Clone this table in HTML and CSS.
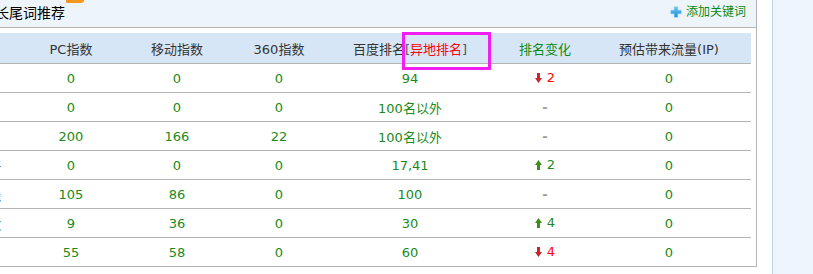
FILE: index.html
```html
<!DOCTYPE html>
<html lang="zh-CN">
<head>
<meta charset="utf-8">
<title>长尾词推荐</title>
<link rel="stylesheet" href="styles.css">
</head>
<body>
<div class="main">
  <div class="bar">
    <span class="badge"></span>
    <h2 class="title">长尾词推荐</h2>
    <a class="add" href="#"><svg class="plus" width="12" height="12" viewBox="0 0 12 12"><defs><linearGradient id="pg" x1="0" y1="0" x2="0" y2="1"><stop offset="0" stop-color="#6cc4f2"/><stop offset="1" stop-color="#1f8fd6"/></linearGradient></defs><path d="M4 0.5h4v3.5h3.5v4H8v3.5H4V8H0.5V4H4z" fill="url(#pg)" stroke="#bfe3f7" stroke-width="0.8"/></svg>添加关键词</a>
  </div>
  <table class="grid">
    <colgroup>
      <col class="c-kw"><col class="c-pc"><col class="c-mo"><col class="c-360"><col class="c-bd"><col class="c-ch"><col class="c-ip">
    </colgroup>
    <thead>
      <tr>
        <th class="kw">关键词</th>
        <th>PC指数</th>
        <th>移动指数</th>
        <th>360指数</th>
        <th class="bd">百度排名<span class="br">[</span><span class="red">异地排名</span><span class="br">]</span><span class="mark"></span></th>
        <th class="green">排名变化</th>
        <th>预估带来流量(IP)</th>
      </tr>
    </thead>
    <tbody>
      <tr><td class="kw">关键词排名优化</td><td>0</td><td>0</td><td>0</td><td>94</td><td><span class="chg down"><svg class="arr" width="7" height="10" viewBox="0 0 7 10"><path d="M2 0h3v5h2l-3.5 5L0 5h2z" fill="#c8262b"/></svg>2</span></td><td>0</td></tr>
      <tr><td class="kw">网站关键词优化</td><td>0</td><td>0</td><td>0</td><td>100名以外</td><td><span class="dash">-</span></td><td>0</td></tr>
      <tr><td class="kw">关键词排名</td><td>200</td><td>166</td><td>22</td><td>100名以外</td><td><span class="dash">-</span></td><td>0</td></tr>
      <tr><td class="kw">网站关键词排名优化推广哪家好</td><td>0</td><td>0</td><td>0</td><td>17,41</td><td><span class="chg up"><svg class="arr" width="7" height="10" viewBox="0 0 7 10"><path d="M3.5 0L7 5H5v5H2V5H0z" fill="#3c8e1c"/></svg>2</span></td><td>0</td></tr>
      <tr><td class="kw">网站关键词排名优化推广多少钱</td><td>105</td><td>86</td><td>0</td><td>100</td><td><span class="dash">-</span></td><td>0</td></tr>
      <tr><td class="kw">网站关键词排名优化推广怎么做</td><td>9</td><td>36</td><td>0</td><td>30</td><td><span class="chg up"><svg class="arr" width="7" height="10" viewBox="0 0 7 10"><path d="M3.5 0L7 5H5v5H2V5H0z" fill="#3c8e1c"/></svg>4</span></td><td>0</td></tr>
      <tr><td class="kw">网站排名优化公司</td><td>55</td><td>58</td><td>0</td><td>60</td><td><span class="chg down"><svg class="arr" width="7" height="10" viewBox="0 0 7 10"><path d="M2 0h3v5h2l-3.5 5L0 5h2z" fill="#c8262b"/></svg>4</span></td><td>0</td></tr>
    </tbody>
  </table>
</div>
<div class="side"></div>
</body>
</html>
```

FILE: styles.css
```css
* { box-sizing: border-box; }

html, body {
  margin: 0;
  padding: 0;
  height: 274px;
  overflow: hidden;
  background: #fff;
}

body {
  display: flex;
  align-items: flex-start;
  font-family: "DejaVu Sans", "Noto Sans CJK SC", sans-serif;
  font-size: 13px;
  color: #333;
}

.main {
  flex: none;
  width: 957px;
  margin-left: -200px;
  border: 1px solid #b4b4b4;
  border-top: none;
}

.bar {
  position: relative;
  height: 28px;
  background: #eef5fa;
  border-bottom: 1px solid #b4b4b4;
  display: flex;
  align-items: center;
  justify-content: space-between;
  padding: 0 10px 1px 194px;
}

.badge {
  position: absolute;
  left: 265px;
  top: 0;
  width: 18px;
  height: 3px;
  background: #f7951e;
  border-radius: 0 0 9px 4px;
}

.title {
  margin: 0;
  font-size: 14px;
  font-weight: normal;
  color: #000;
  line-height: 16px;
}

.add {
  display: flex;
  align-items: center;
  gap: 4px;
  font-size: 12px;
  color: #0a8a12;
  text-decoration: none;
  line-height: 14px;
  margin-top: -2px;
}

.plus { display: block; }

.grid {
  width: 946px;
  margin: 5px 5px 0 4px;
  border-collapse: separate;
  border-spacing: 0;
  table-layout: fixed;
}

.c-kw { width: 224px; }
.c-pc { width: 84px; }
.c-mo { width: 128px; }
.c-360 { width: 76px; }
.c-bd { width: 186px; }
.c-ch { width: 84px; }
.c-ip { width: 164px; }

.grid th {
  height: 31px;
  padding: 0;
  background: #d6e6f7;
  border-bottom: 1px solid #b4b4b4;
  font-weight: normal;
  color: #333;
  text-align: center;
  white-space: nowrap;
}

.grid td {
  height: 29px;
  padding: 0;
  border-bottom: 1px solid #b4b4b4;
  text-align: center;
  color: #1a8a20;
  white-space: nowrap;
}

.grid tbody tr:last-child td {
  height: 28px;
  border-bottom: none;
}

.grid .kw {
  text-align: left;
  padding-left: 14px;
  color: #222;
  overflow: hidden;
}

.grid th.green { color: #0a8a12; }

.bd { position: relative; }
.br { color: #555; }
.red { color: #f00; }

.mark {
  position: absolute;
  left: 85px;
  top: -1px;
  width: 89px;
  height: 38px;
  border: 3px solid #f21df0;
  z-index: 2;
}

.chg {
  display: inline-flex;
  align-items: center;
  gap: 5px;
}
.chg.down { color: #f00; }
.chg.up { color: #1a8a20; }
.arr { display: block; margin-top: 1px; }

.dash {
  color: #999;
  font-weight: bold;
}

.side {
  flex: 1;
  align-self: stretch;
  margin-left: 15px;
  background: #eef5fc;
  border-left: 1px solid #b9d6ec;
}
```
